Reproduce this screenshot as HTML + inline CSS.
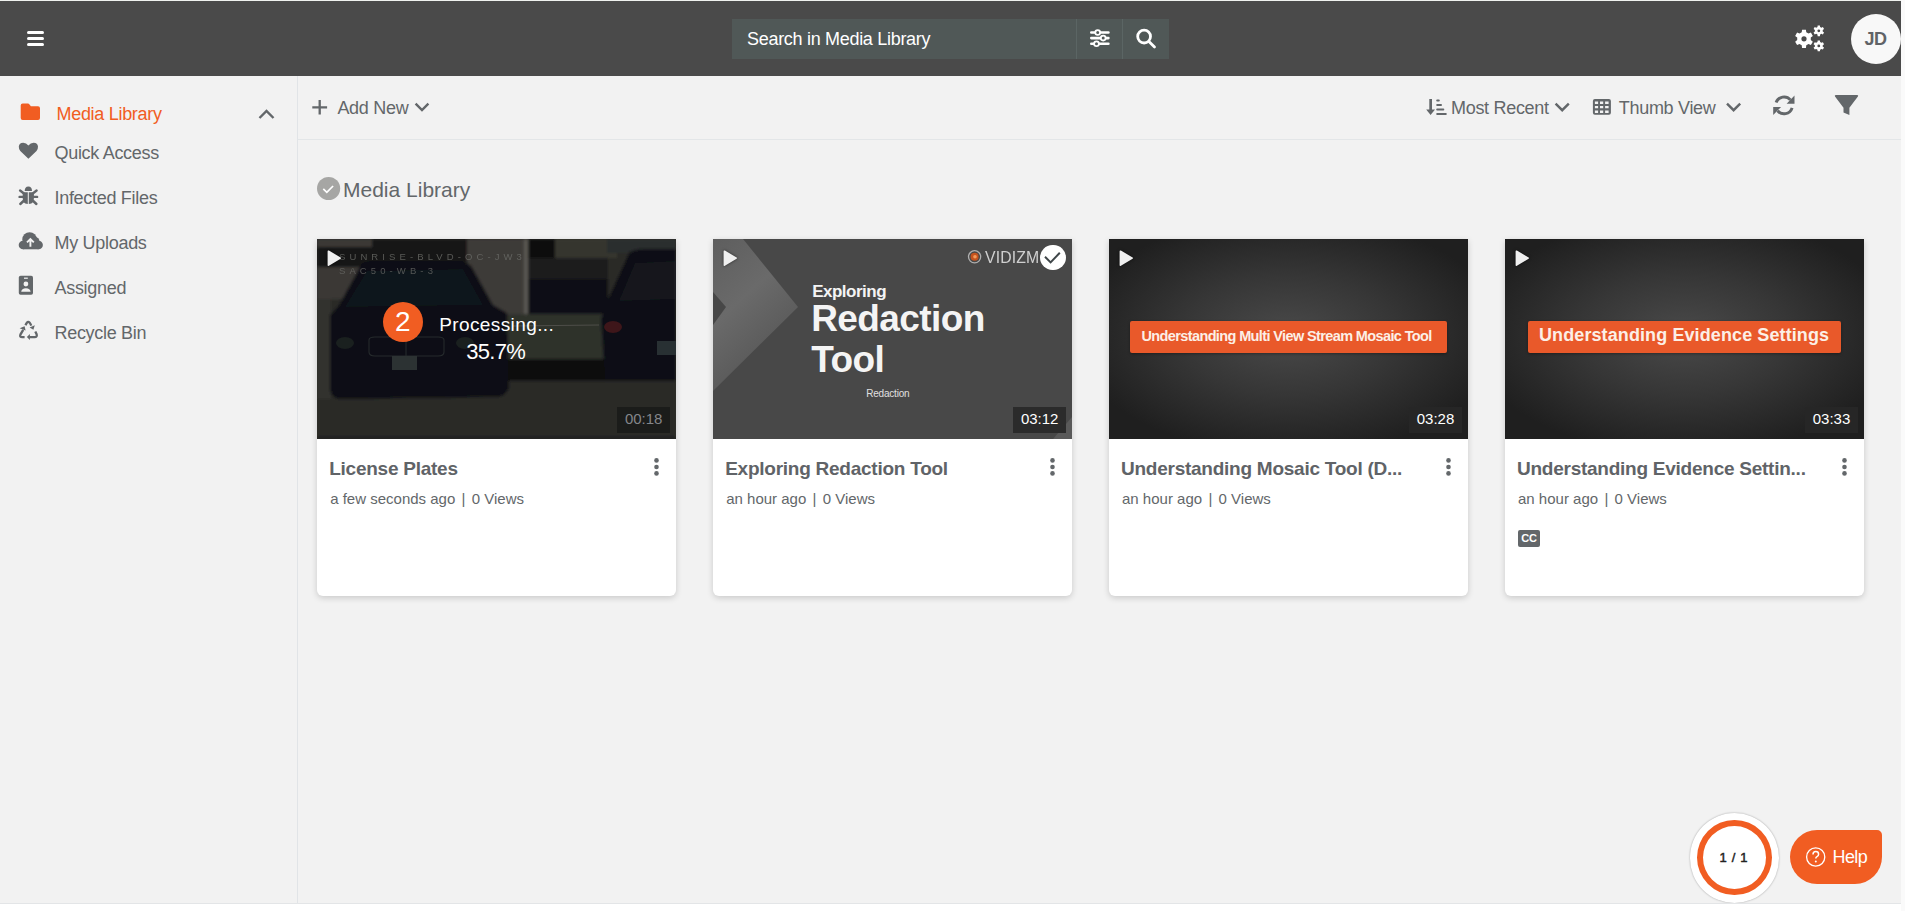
<!DOCTYPE html>
<html><head><meta charset="utf-8">
<style>
html,body{margin:0;padding:0;background:#fff;width:1905px;height:911px;overflow:hidden;}
*{box-sizing:border-box;}
body{font-family:"Liberation Sans",sans-serif;position:relative;}
.a{position:absolute;white-space:nowrap;}
#page{position:absolute;left:0;top:0;width:1901px;height:904px;background:#f2f2f2;border-bottom:1px solid #e3e5e7;overflow:hidden;}
#topstrip{position:absolute;left:0;top:0;width:1901px;height:1px;background:#f0f2ef;}
#hdr{position:absolute;left:0;top:1px;width:1901px;height:75px;background:#4a4a4a;}
#side{position:absolute;left:0;top:76px;width:298px;height:828px;border-right:1px solid #e1e4e7;}
.t18{font-size:18px;line-height:18px;letter-spacing:-0.3px;}
.gray{color:#63676a;}
.org{color:#f15d22;}
#tb{position:absolute;left:298px;top:76px;width:1603px;height:64px;border-bottom:1px solid #e3e6e8;}
.card{position:absolute;top:239px;width:358.5px;height:357px;background:#fff;border-radius:0 0 6px 6px;box-shadow:0 2px 6px rgba(0,0,0,0.17);}
.thumb{position:absolute;left:0;top:0;width:100%;height:200px;overflow:hidden;}
.ttl{position:absolute;left:12px;top:219.8px;font-size:19px;line-height:19px;font-weight:bold;color:#606367;white-space:nowrap;letter-spacing:-0.25px;}
.sub{position:absolute;left:13px;top:252.3px;font-size:15px;line-height:15px;color:#63676a;white-space:nowrap;}
.sep{display:inline-block;margin:0 6.3px;}
.kebab{position:absolute;left:337px;top:219px;width:4px;height:18px;}
.kebab i{position:absolute;left:0;width:4.4px;height:4.4px;border-radius:50%;background:#63676a;}
.dur{position:absolute;left:300px;top:168px;width:53px;height:26px;background:rgba(30,30,30,0.85);color:#fff;font-size:15px;line-height:24px;text-align:center;}
.play{position:absolute;left:10px;top:11px;}
</style></head><body>
<div style="position:absolute;left:1901px;top:0;width:4px;height:911px;background:#fafafa"></div>
<div id="page">
  <div id="topstrip"></div>
  <div id="hdr">
    <!-- hamburger -->
    <div class="a" style="left:27px;top:30px;width:17px;height:3px;background:#fff;border-radius:1.5px"></div>
    <div class="a" style="left:27px;top:36px;width:17px;height:3px;background:#fff;border-radius:1.5px"></div>
    <div class="a" style="left:27px;top:41.5px;width:17px;height:3px;background:#fff;border-radius:1.5px"></div>
    <!-- search -->
    <div class="a" style="left:732px;top:18px;width:437px;height:40px;background:#505857"></div>
    <div class="a" style="left:1076px;top:18px;width:1px;height:40px;background:#5b6564"></div>
    <div class="a" style="left:1122px;top:18px;width:1px;height:40px;background:#5b6564"></div>
    <div class="a t18" style="left:747px;top:28.7px;color:#fff">Search in Media Library</div>
  </div>
  <div id="side">
    <div class="a t18 org" style="left:56.5px;top:28.8px">Media Library</div>
    <div class="a t18 gray" style="left:54.5px;top:67.6px">Quick Access</div>
    <div class="a t18 gray" style="left:54.5px;top:112.8px">Infected Files</div>
    <div class="a t18 gray" style="left:54.5px;top:158px">My Uploads</div>
    <div class="a t18 gray" style="left:54.5px;top:202.8px">Assigned</div>
    <div class="a t18 gray" style="left:54.5px;top:247.6px">Recycle Bin</div>
  </div>
  <div id="tb">
    <div class="a t18 gray" style="left:39.4px;top:22.7px">Add New</div>
    <div class="a t18 gray" style="left:1153px;top:22.8px">Most Recent</div>
    <div class="a t18 gray" style="left:1320.8px;top:22.7px">Thumb View</div>
  </div>

  <!-- header icons -->
  <svg class="a" style="left:1080px;top:19px" width="40" height="40" viewBox="1080 19 40 40">
    <g stroke="#fff" stroke-width="2.6" stroke-linecap="round" fill="none">
      <line x1="1091.3" y1="32.5" x2="1108.4" y2="32.5"/>
      <line x1="1091.3" y1="38.1" x2="1108.4" y2="38.1"/>
      <line x1="1091.3" y1="43.8" x2="1108.4" y2="43.8"/>
    </g>
    <g fill="#505857" stroke="#fff" stroke-width="1.8">
      <circle cx="1097.7" cy="32.5" r="2.4"/>
      <circle cx="1103.2" cy="38.1" r="2.4"/>
      <circle cx="1096.5" cy="43.8" r="2.4"/>
    </g>
  </svg>
  <svg class="a" style="left:1130px;top:22px" width="32" height="32" viewBox="1130 22 32 32">
    <circle cx="1144.1" cy="36.6" r="6.4" fill="none" stroke="#fff" stroke-width="2.8"/>
    <line x1="1148.9" y1="41.4" x2="1154.5" y2="47" stroke="#fff" stroke-width="2.8" stroke-linecap="round"/>
  </svg>
  <svg class="a" style="left:1780px;top:10px" width="50" height="50" viewBox="0 0 50 50">
    <path fill="#fff" fill-rule="evenodd" d="M21.73,22.28 L22.07,19.70 L25.93,19.70 L26.27,22.28 L28.51,23.58 L30.91,22.58 L32.84,25.93 L30.78,27.51 L30.78,30.09 L32.84,31.67 L30.91,35.02 L28.51,34.02 L26.27,35.32 L25.93,37.90 L22.07,37.90 L21.73,35.32 L19.49,34.02 L17.09,35.02 L15.16,31.67 L17.22,30.09 L17.22,27.51 L15.16,25.93 L17.09,22.58 L19.49,23.58Z M21.40,28.80 a2.6,2.6 0 1 0 5.2,0 a2.6,2.6 0 1 0 -5.2,0Z"/>
    <path fill="#fff" fill-rule="evenodd" d="M37.48,17.02 L37.66,15.42 L39.94,15.42 L40.12,17.02 L41.41,17.77 L42.89,17.12 L44.03,19.10 L42.73,20.05 L42.73,21.55 L44.03,22.50 L42.89,24.48 L41.41,23.83 L40.12,24.58 L39.94,26.18 L37.66,26.18 L37.48,24.58 L36.19,23.83 L34.71,24.48 L33.57,22.50 L34.87,21.55 L34.87,20.05 L33.57,19.10 L34.71,17.12 L36.19,17.77Z M37.40,20.80 a1.4,1.4 0 1 0 2.8,0 a1.4,1.4 0 1 0 -2.8,0Z"/>
    <path fill="#fff" fill-rule="evenodd" d="M37.48,32.12 L37.66,30.52 L39.94,30.52 L40.12,32.12 L41.41,32.87 L42.89,32.22 L44.03,34.20 L42.73,35.15 L42.73,36.65 L44.03,37.60 L42.89,39.58 L41.41,38.93 L40.12,39.68 L39.94,41.28 L37.66,41.28 L37.48,39.68 L36.19,38.93 L34.71,39.58 L33.57,37.60 L34.87,36.65 L34.87,35.15 L33.57,34.20 L34.71,32.22 L36.19,32.87Z M37.40,35.90 a1.4,1.4 0 1 0 2.8,0 a1.4,1.4 0 1 0 -2.8,0Z"/>
  </svg>
  <div class="a" style="left:1851px;top:14px;width:50px;height:50px;border-radius:50%;background:#f8f8f8"></div>
  <div class="a" style="left:1864.5px;top:30px;font-size:18px;line-height:18px;font-weight:bold;color:#606367;letter-spacing:-0.5px">JD</div>

  <!-- sidebar icons -->
  <svg class="a" style="left:18px;top:100px" width="26" height="250" viewBox="18 100 26 250">
    <path fill="#f15d22" d="M20.7,105.5 q0,-2 2,-2 h5.2 q1,0 1.6,0.9 l1.4,1.8 h7.1 q2,0 2,2 v9.8 q0,2 -2,2 h-15.3 q-2,0 -2,-2 z"/>
    <path fill="#63676a" d="M28.4,158.8 L20.3,150.9 Q18.7,149.2 18.8,146.6 Q19.1,142.8 23.2,142.8 Q26.3,142.8 28.4,145.4 Q30.5,142.8 33.6,142.8 Q37.7,142.8 38,146.6 Q38.1,149.2 36.5,150.9 Z"/>
    <!-- bug -->
    <path fill="#63676a" d="M24.7,191 a3.65,4.5 0 0 1 7.3,0 z"/>
    <path fill="#63676a" d="M22.7,192.3 h5.1 v11.6 q-3,0 -4.1,-1.6 q-1,-1.8 -1,-4 z M28.8,192.3 h5.1 v6 q0,2.2 -1,4 q-1.1,1.6 -4.1,1.6 z"/>
    <g stroke="#63676a" stroke-width="2.4" stroke-linecap="round">
      <line x1="20.1" y1="190.5" x2="23.6" y2="193.2"/><line x1="36.6" y1="190.5" x2="33.1" y2="193.2"/>
      <line x1="19.6" y1="196.9" x2="23.5" y2="196.9"/><line x1="37.1" y1="196.9" x2="33.2" y2="196.9"/>
      <line x1="20.3" y1="204" x2="23.5" y2="201"/><line x1="36.4" y1="204" x2="33.2" y2="201"/>
    </g>
    <!-- cloud upload -->
    <g fill="#63676a">
      <circle cx="23" cy="245" r="4.3"/>
      <circle cx="29.6" cy="239.5" r="7.3"/>
      <circle cx="38.6" cy="245" r="4.3"/>
      <circle cx="35" cy="241.5" r="4.5"/>
      <rect x="23" y="241" width="15.6" height="8.3"/>
    </g>
    <path fill="none" stroke="#f2f2f2" stroke-width="1.9" d="M30.4,246.7 v-7.6 M27,242.4 l3.4,-3.4 l3.4,3.4"/>
    <!-- id badge -->
    <rect x="18.8" y="275.7" width="14.2" height="19" rx="1.8" fill="#63676a"/>
    <rect x="24" y="277.6" width="3.8" height="1.2" fill="#f2f2f2"/>
    <circle cx="25.9" cy="284" r="2.4" fill="#f2f2f2"/>
    <path fill="#f2f2f2" d="M21.2,291.8 q0.4,-3.6 4.7,-3.6 q4.3,0 4.7,3.6 z"/>
    <!-- recycle -->
    <g fill="none" stroke="#63676a" stroke-width="2.3" stroke-linecap="butt">
      <path d="M25.5,325.2 Q26.9,322 28.2,321.9 Q29.6,321.8 31.3,325.6"/>
      <path d="M23.2,329.8 L20.4,334.6 Q19.4,337.1 22.3,337.1 H24.6"/>
      <path d="M35.3,331.5 L36.6,334.2 Q37.5,337.1 34.6,337.1 H29.4"/>
    </g>
    <path fill="#63676a" d="M29.6,327.6 L34.8,325.2 L33.4,329.8 Z M19.6,328.3 L24.6,326.3 L25.6,330.6 Z M26.9,337 L29.9,334 V340 Z"/>
    <!-- collapse chevron -->
  </svg>
  <svg class="a" style="left:255px;top:104px" width="24" height="20" viewBox="255 104 24 20">
    <path d="M259.5,118 l7,-7 l7,7" fill="none" stroke="#63676a" stroke-width="2.4"/>
  </svg>

  <!-- toolbar icons -->
  <svg class="a" style="left:308px;top:95px" width="130" height="25" viewBox="308 95 130 25">
    <path d="M319.7,99.9 v14.7 M312.3,107.3 h14.8" stroke="#63676a" stroke-width="2.3" fill="none"/>
    <path d="M415.6,103.6 l6.4,6.4 l6.4,-6.4" stroke="#63676a" stroke-width="2.4" fill="none"/>
  </svg>
  <svg class="a" style="left:1420px;top:92px" width="330" height="30" viewBox="1420 92 330 30">
    <g fill="#63676a">
      <rect x="1429.3" y="99" width="2.7" height="12"/>
      <path d="M1426.2,109.6 h8.8 l-4.4,5.3 z"/>
      <rect x="1436.2" y="99.4" width="3.6" height="2.1" rx="1"/>
      <rect x="1436.2" y="103.9" width="5.8" height="2" rx="1"/>
      <rect x="1436.2" y="108.4" width="8.1" height="2.1" rx="1"/>
      <rect x="1436.2" y="112.9" width="10.6" height="2.1" rx="1"/>
    </g>
    <path d="M1555.6,103.6 l6.6,6.6 l6.6,-6.6" stroke="#63676a" stroke-width="2.4" fill="none"/>
    <path fill="#63676a" fill-rule="evenodd" d="M1594.9,99 h14 q2,0 2,2 v11.7 q0,2 -2,2 h-14 q-2,0 -2,-2 v-11.7 q0,-2 2,-2 z
      M1594.9,101.6 v2.3 h3.2 v-2.3 z M1600,101.6 v2.3 h3.2 v-2.3 z M1605.1,101.6 v2.3 h3.5 v-2.3 z
      M1594.9,106 v2.3 h3.2 v-2.3 z M1600,106 v2.3 h3.2 v-2.3 z M1605.1,106 v2.3 h3.5 v-2.3 z
      M1594.9,110.6 v2.3 h3.2 v-2.3 z M1600,110.6 v2.3 h3.2 v-2.3 z M1605.1,110.6 v2.3 h3.5 v-2.3 z"/>
    <path d="M1727,103.6 l6.6,6.6 l6.6,-6.6" stroke="#63676a" stroke-width="2.4" fill="none"/>
  </svg>
  <svg class="a" style="left:1768px;top:90px" width="32" height="30" viewBox="0 0 32 30">
    <g fill="none" stroke="#63676a" stroke-width="2.9">
      <path d="M8.1,12.6 A8.4,8.4 0 0 1 22.4,9.9"/>
      <path d="M24.1,17.8 A8.4,8.4 0 0 1 9.6,20.7"/>
    </g>
    <path fill="#63676a" d="M18.6,13.7 H26.5 V5.6 Z M5.2,16.9 H13.1 L5.2,25 Z"/>
  </svg>
  <svg class="a" style="left:1830px;top:90px" width="32" height="30" viewBox="0 0 32 30">
    <path fill="#63676a" d="M5.8,4.9 H27.2 Q28.8,5.1 27.9,6.6 L19.4,17.8 V24.9 L13.5,22.6 V17.8 L5.0,6.6 Q4.2,5.1 5.8,4.9 Z"/>
  </svg>

  <!-- heading check -->
  <svg class="a" style="left:316px;top:176px" width="26" height="26" viewBox="316 176 26 26">
    <circle cx="328.6" cy="188.5" r="11.6" fill="#a6a6a4"/>
    <path d="M323.3,188.9 l3.5,3.4 l6.3,-6.3" fill="none" stroke="#fff" stroke-width="1.7"/>
  </svg>
  <div class="a gray" style="left:343px;top:179px;font-size:21px;line-height:21px">Media Library</div>

  <div class="card" style="left:317.2px">
    <div class="thumb" style="background:#2f302c">
      <svg width="359" height="200" viewBox="0 0 359 200" style="position:absolute;left:0;top:0">
        <defs><filter id="bl1" x="-5%" y="-5%" width="110%" height="110%"><feGaussianBlur stdDeviation="1.6"/></filter></defs>
        <g filter="url(#bl1)">
          <rect x="0" y="0" width="359" height="200" fill="#2b2c28"/>
          <rect x="0" y="0" width="60" height="60" fill="#3a3935"/>
          <rect x="0" y="8" width="58" height="20" fill="#151618"/>
          <rect x="55" y="0" width="100" height="24" fill="#141618"/>
          <rect x="150" y="0" width="57" height="75" fill="#3d3b37"/>
          <rect x="207" y="0" width="4" height="75" fill="#5a5853"/>
          <rect x="211" y="0" width="27" height="28" fill="#0c0d0f"/>
          <rect x="238" y="0" width="62" height="19" fill="#34342f"/>
          <rect x="211" y="19" width="80" height="21" fill="#1b1d1e"/>
          <rect x="211" y="40" width="80" height="35" fill="#0d1013"/>
          <rect x="180" y="75" width="110" height="45" fill="#2f302c"/>
          <rect x="180" y="120" width="179" height="22" fill="#07090c"/>
          <rect x="290" y="0" width="69" height="14" fill="#2c2e2f"/>
          <rect x="0" y="60" width="14" height="100" fill="#33332e"/>
          <path d="M44,26 Q46,22 60,22 L140,22 Q152,22 156,30 L176,66 L190,74 L192,148 Q190,158 178,158 L24,160 Q13,160 13,148 L13,76 L22,66 Z" fill="#0a0d13"/>
          <path d="M50,32 L146,30 L166,66 L28,68 Z" fill="#11151b"/>
          <path d="M312,14 Q316,10 330,10 L359,10 L359,142 L288,142 L284,80 L292,58 Z" fill="#0a0d13"/>
          <path d="M318,24 L359,22 L359,60 L302,62 Z" fill="#13171c"/>
          <rect x="0" y="160" width="359" height="40" fill="#2b2c28"/>
          <rect x="0" y="198" width="359" height="2" fill="#121212"/>
        </g>
        <g fill="none" stroke="#262b2d" stroke-width="1.1">
          <path d="M52,101 Q52,98 58,98 L121,98 Q127,98 127,101 L127,113 Q127,117 121,117 L58,117 Q52,117 52,113 Z"/>
          <line x1="89" y1="98" x2="89" y2="117"/>
        </g>
        <rect x="75" y="117" width="25" height="14" fill="#2c3233"/>
        <ellipse cx="28" cy="104" rx="9" ry="6" fill="#1a201f"/><ellipse cx="148" cy="104" rx="9" ry="6" fill="#1a201f"/>
        <rect x="340" y="102" width="19" height="14" fill="#283033"/>
        <ellipse cx="296" cy="88" rx="9" ry="6" fill="#3e161a"/>
        <line x1="196" y1="87" x2="282" y2="86" stroke="#4e4e49" stroke-width="1.1"/>
        <text x="22" y="21" font-family="Liberation Sans" font-size="9.5" letter-spacing="4.1" fill="#6a6b67" opacity="0.8">SUNRISE-BLVD-OC-JW3</text>
        <text x="22" y="35" font-family="Liberation Sans" font-size="9.5" letter-spacing="4.1" fill="#6a6b67" opacity="0.75">SAC50-WB-3</text>
      </svg>
      <svg class="play" width="20" height="22" viewBox="0 0 20 22" style="left:6.5px;top:9px;filter:drop-shadow(0 0 1.5px rgba(0,0,0,.6))"><path d="M3.6,3.4 Q3.6,1.9 4.9,2.6 L16.6,9.5 Q17.6,10.1 16.6,10.7 L4.9,17.8 Q3.6,18.6 3.6,17.1 Z" fill="#efefef"/></svg>
      <div style="position:absolute;left:65.6px;top:63px;width:40px;height:40px;border-radius:50%;background:#f15d22;color:#fff;font-size:28px;line-height:40px;text-align:center">2</div>
      <div style="position:absolute;left:122px;top:75.5px;font-size:19px;line-height:19px;color:#fff;white-space:nowrap;letter-spacing:0.4px">Processing...</div>
      <div style="position:absolute;left:149px;top:102px;font-size:22px;line-height:22px;color:#fff;white-space:nowrap;letter-spacing:-0.7px">35.7%</div>
      <div class="dur" style="left:300px;top:168px;background:#1b1c1a;color:#85868a">00:18</div>
    </div>
    <svg class="a" style="left:333px;top:215px" width="13" height="26" viewBox="0 0 13 26"><g fill="#63676a"><circle cx="6.5" cy="6.4" r="2.3"/><circle cx="6.5" cy="13" r="2.3"/><circle cx="6.5" cy="19.4" r="2.3"/></g></svg>
    <div class="ttl">License Plates</div>
    <div class="sub">a few seconds ago<span class="sep">|</span>0 Views</div>
  </div>
  <div class="card" style="left:713.2px">
    <div class="thumb" style="background:#484848">
      <svg width="359" height="200" viewBox="0 0 359 200" style="position:absolute;left:0;top:0">
        <defs>
          <linearGradient id="chev" x1="0" y1="0" x2="0.5" y2="1"><stop offset="0" stop-color="#5e5e5e"/><stop offset="0.45" stop-color="#6a6a6a"/><stop offset="1" stop-color="#545454"/></linearGradient>
        </defs>
        <polygon points="0,0 30,0 85,68 0,152" fill="url(#chev)"/>
        <polygon points="0,53 13,68 0,86" fill="#474747"/>
        <polygon points="340,200 359,178 359,200" fill="#5a5a5a"/>
      </svg>
      <svg class="play" width="20" height="22" viewBox="0 0 20 22" style="left:6.5px;top:9px;filter:drop-shadow(0 0 1.5px rgba(0,0,0,.6))"><path d="M3.6,3.4 Q3.6,1.9 4.9,2.6 L16.6,9.5 Q17.6,10.1 16.6,10.7 L4.9,17.8 Q3.6,18.6 3.6,17.1 Z" fill="#efefef"/></svg>
      <svg style="position:absolute;left:254px;top:10px" width="16" height="16" viewBox="0 0 16 16">
        <circle cx="7.6" cy="7.8" r="6.1" fill="none" stroke="#b0b0b0" stroke-width="1.3"/>
        <circle cx="7.6" cy="7.8" r="4" fill="#c4531f"/>
        <circle cx="8" cy="7.8" r="1.8" fill="#f39a5a"/>
      </svg>
      <div style="position:absolute;left:271.5px;top:9.5px;font-size:17px;line-height:17px;color:#cfcfcf;white-space:nowrap;letter-spacing:0.15px;transform:scaleX(0.93);transform-origin:0 0">VIDIZM</div>
      <div style="position:absolute;left:327px;top:5.5px;width:25.5px;height:25.5px;border-radius:50%;background:#fff"></div>
      <svg style="position:absolute;left:327px;top:5.5px" width="26" height="26" viewBox="0 0 26 26"><path d="M5,11.8 L10.6,17.4 L19.8,7.8" fill="none" stroke="#3f4649" stroke-width="2"/></svg>
      <div style="position:absolute;left:99px;top:44px;font-size:17px;line-height:17px;font-weight:bold;color:#f4f4f4;white-space:nowrap;letter-spacing:-0.5px">Exploring</div>
      <div style="position:absolute;left:98px;top:60.5px;font-size:37px;line-height:37px;font-weight:bold;color:#f4f4f4;white-space:nowrap;letter-spacing:-0.6px">Redaction</div>
      <div style="position:absolute;left:98px;top:102px;font-size:37px;line-height:37px;font-weight:bold;color:#f4f4f4;white-space:nowrap;letter-spacing:-0.6px">Tool</div>
      <div style="position:absolute;left:153px;top:150px;font-size:10px;line-height:10px;color:#e0e0e0;white-space:nowrap;letter-spacing:-0.2px">Redaction</div>
      <div class="dur" style="left:300px;top:168px;background:#2b2b2b;color:#fff">03:12</div>
    </div>
    <svg class="a" style="left:333px;top:215px" width="13" height="26" viewBox="0 0 13 26"><g fill="#63676a"><circle cx="6.5" cy="6.4" r="2.3"/><circle cx="6.5" cy="13" r="2.3"/><circle cx="6.5" cy="19.4" r="2.3"/></g></svg>
    <div class="ttl">Exploring Redaction Tool</div>
    <div class="sub">an hour ago<span class="sep">|</span>0 Views</div>
  </div>
  <div class="card" style="left:1109px">
    <div class="thumb" style="background:radial-gradient(ellipse 60% 60% at 50% 48%, #4a4a4a 0%, #363636 50%, #1f1f1f 100%)">
      <svg class="play" width="20" height="22" viewBox="0 0 20 22" style="left:6.5px;top:9px;filter:drop-shadow(0 0 1.5px rgba(0,0,0,.6))"><path d="M3.6,3.4 Q3.6,1.9 4.9,2.6 L16.6,9.5 Q17.6,10.1 16.6,10.7 L4.9,17.8 Q3.6,18.6 3.6,17.1 Z" fill="#efefef"/></svg>
      <div style="position:absolute;left:21.3px;top:82.3px;width:316.7px;height:31.8px;background:#e9592a;border-radius:2px;box-shadow:0 1px 3px rgba(0,0,0,.35)"></div>
      <div style="position:absolute;left:32.5px;top:90.43px;font-size:14.5px;line-height:14.5px;font-weight:bold;color:#fcefe6;white-space:nowrap;letter-spacing:-0.62px">Understanding Multi View Stream Mosaic Tool</div>
      <div class="dur" style="left:300px;top:168px;background:#262626;color:#fff">03:28</div>
    </div>
    <svg class="a" style="left:333px;top:215px" width="13" height="26" viewBox="0 0 13 26"><g fill="#63676a"><circle cx="6.5" cy="6.4" r="2.3"/><circle cx="6.5" cy="13" r="2.3"/><circle cx="6.5" cy="19.4" r="2.3"/></g></svg>
    <div class="ttl">Understanding Mosaic Tool (D...</div>
    <div class="sub">an hour ago<span class="sep">|</span>0 Views</div>
  </div>
  <div class="card" style="left:1505px">
    <div class="thumb" style="background:radial-gradient(ellipse 60% 60% at 50% 48%, #4a4a4a 0%, #363636 50%, #1f1f1f 100%)">
      <svg class="play" width="20" height="22" viewBox="0 0 20 22" style="left:6.5px;top:9px;filter:drop-shadow(0 0 1.5px rgba(0,0,0,.6))"><path d="M3.6,3.4 Q3.6,1.9 4.9,2.6 L16.6,9.5 Q17.6,10.1 16.6,10.7 L4.9,17.8 Q3.6,18.6 3.6,17.1 Z" fill="#efefef"/></svg>
      <div style="position:absolute;left:22.6px;top:82.3px;width:313.2px;height:31.8px;background:#e9592a;border-radius:2px;box-shadow:0 1px 3px rgba(0,0,0,.35)"></div>
      <div style="position:absolute;left:34px;top:87.46px;font-size:18px;line-height:18px;font-weight:bold;color:#fcefe6;white-space:nowrap;letter-spacing:0.1px">Understanding Evidence Settings</div>
      <div class="dur" style="left:300px;top:168px;background:#262626;color:#fff">03:33</div>
    </div>
    <svg class="a" style="left:333px;top:215px" width="13" height="26" viewBox="0 0 13 26"><g fill="#63676a"><circle cx="6.5" cy="6.4" r="2.3"/><circle cx="6.5" cy="13" r="2.3"/><circle cx="6.5" cy="19.4" r="2.3"/></g></svg>
    <div class="ttl">Understanding Evidence Settin...</div>
    <div class="sub">an hour ago<span class="sep">|</span>0 Views</div>
    <div style="position:absolute;left:13px;top:291px;width:22px;height:17px;border-radius:2px;background:#63676a;color:#fff;font-size:11px;line-height:17px;font-weight:bold;text-align:center;letter-spacing:-0.3px">CC</div>
  </div>
  <!-- bottom right -->
  <div class="a" style="left:1689.5px;top:813px;width:89px;height:89.5px;border-radius:50%;background:#fff;box-shadow:0 0 2px rgba(0,0,0,.35)"></div>
  <div class="a" style="left:1697.2px;top:819.8px;width:74.8px;height:75.2px;border-radius:50%;border:6.3px solid #f15d22"></div>
  <div class="a" style="left:1719.5px;top:851px;font-size:13px;line-height:13px;color:#222;-webkit-text-stroke:0.45px #222;letter-spacing:0.9px;word-spacing:-0.5px">1 / 1</div>
  <div class="a" style="left:1790px;top:829.6px;width:92px;height:54.4px;border-radius:27px 5px 27px 27px;background:#f15d22"></div>
  <svg class="a" style="left:1804px;top:845px" width="24" height="24" viewBox="0 0 24 24">
    <circle cx="11.7" cy="12" r="9.1" fill="none" stroke="#fff" stroke-width="1.3"/>
    <path d="M9,9.6 q0,-3 2.8,-3 q2.8,0 2.8,2.6 q0,1.6 -1.6,2.4 q-1.2,0.6 -1.2,2" fill="none" stroke="#fff" stroke-width="1.5"/>
    <circle cx="11.8" cy="16.4" r="1" fill="#fff"/>
  </svg>
  <div class="a" style="left:1832.5px;top:847.8px;font-size:18px;line-height:18px;color:#fff;letter-spacing:-0.6px">Help</div>
</div>
</body></html>
